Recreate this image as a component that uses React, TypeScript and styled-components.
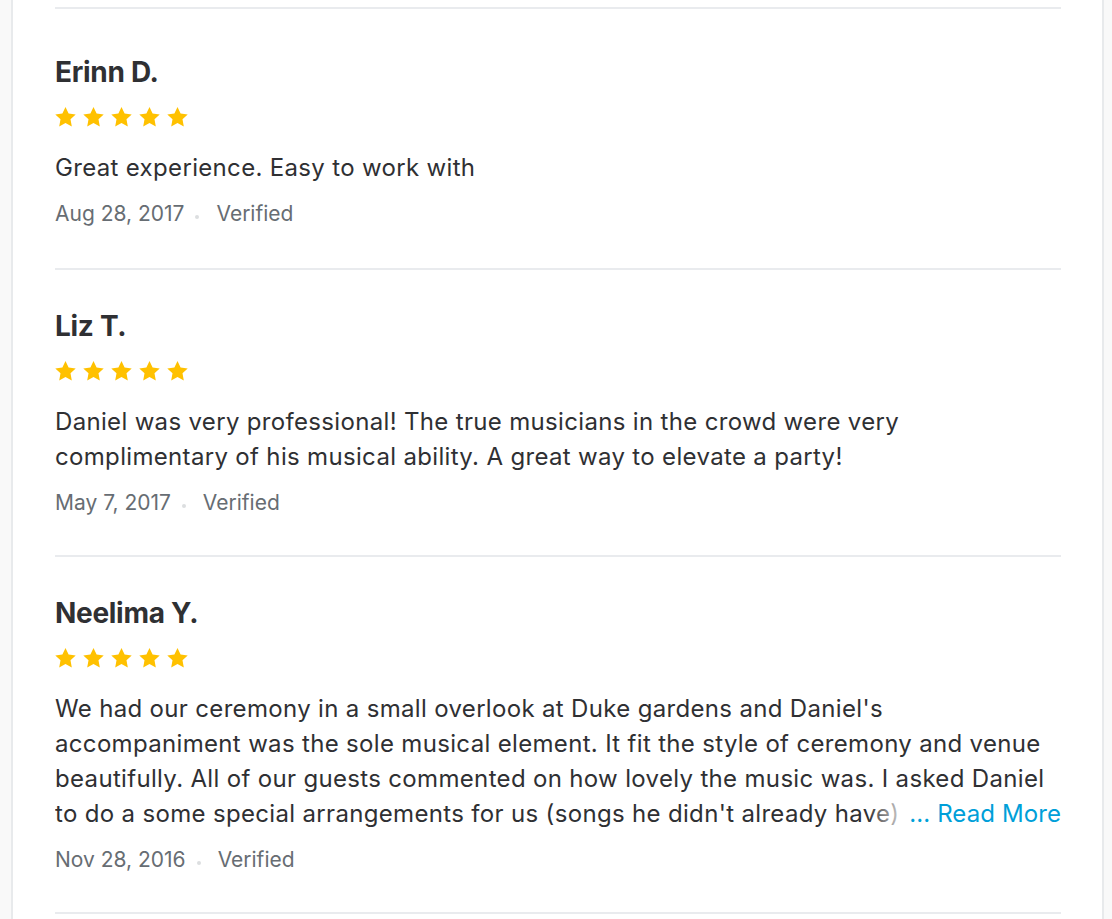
import React from "react";
import styled, { createGlobalStyle } from "styled-components";

const GlobalStyle = createGlobalStyle`
  html, body {
    margin: 0;
    padding: 0;
    background: #f9f9f9;
  }
  body {
    font-family: Inter, "Open Sans", sans-serif;
    color: #2f3033;
  }
`;

const Page = styled.div`
  display: flex;
  padding: 0 8px 0 11px;
  height: 919px;
  overflow: hidden;
`;

const Card = styled.section`
  flex: 1;
  background: #ffffff;
  border-left: 2px solid #e8eaec;
  border-right: 2px solid #e8eaec;
  padding: 7px 41px 0 42px;
`;

const Review = styled.article<{ $first?: boolean }>`
  border-top: 2px solid #e9ebee;
  padding: ${(p) => (p.$first ? "46px 0 40px" : "39px 0 38px")};
`;

const Name = styled.h3`
  margin: 0;
  font-size: 28px;
  line-height: 34px;
  font-weight: 700;
  color: #2f3033;
  letter-spacing: -0.3px;
`;

const Stars = styled.div`
  display: flex;
  gap: 7px;
  height: 20px;
  margin-top: 18px;
`;

const Body = styled.div<{ $clamped?: boolean }>`
  position: relative;
  margin-top: 23px;
  font-size: 24px;
  line-height: 35px;
  letter-spacing: 0.33px;
  color: #2f3033;
  white-space: nowrap;
  ${(p) => (p.$clamped ? "max-height: 140px; overflow: hidden;" : "")}
`;

const ReadMore = styled.a`
  position: absolute;
  right: 0;
  bottom: 0;
  line-height: 35px;
  padding-left: 7px;
  letter-spacing: 0.1px;
  background: #ffffff;
  color: #009fd9;
  text-decoration: none;
  cursor: pointer;
  &::before {
    content: "";
    position: absolute;
    top: 0;
    bottom: 0;
    left: -34px;
    width: 34px;
    background: linear-gradient(
      to right,
      rgba(255, 255, 255, 0),
      rgba(255, 255, 255, 0.8)
    );
  }
`;

const Meta = styled.div`
  display: flex;
  align-items: center;
  margin-top: 15px;
  font-size: 21px;
  line-height: 28px;
  letter-spacing: 0;
  color: #676d73;
`;

const Dot = styled.span`
  width: 4px;
  height: 4px;
  border-radius: 50%;
  background: #dcdee0;
  margin: 6px 17px 0 11px;
`;

const Star = () => (
  <svg width="21" height="20" viewBox="0 0 21 20" aria-hidden="true">
    <path
      fill="#ffc100"
      d="M10.5 0l3.1 6.5 7.1.9-5.2 4.9 1.3 7.1-6.3-3.4-6.3 3.4 1.3-7.1L.3 7.4l7.1-.9z"
    />
  </svg>
);

type ReviewData = {
  name: string;
  lines: string[];
  date: string;
  clamped?: boolean;
};

const reviews: ReviewData[] = [
  {
    name: "Erinn D.",
    lines: ["Great experience. Easy to work with"],
    date: "Aug 28, 2017",
  },
  {
    name: "Liz T.",
    lines: [
      "Daniel was very professional! The true musicians in the crowd were very",
      "complimentary of his musical ability. A great way to elevate a party!",
    ],
    date: "May 7, 2017",
  },
  {
    name: "Neelima Y.",
    lines: [
      "We had our ceremony in a small overlook at Duke gardens and Daniel's",
      "accompaniment was the sole musical element. It fit the style of ceremony and venue",
      "beautifully. All of our guests commented on how lovely the music was. I asked Daniel",
      "to do a some special arrangements for us (songs he didn't already have)",
    ],
    date: "Nov 28, 2016",
    clamped: true,
  },
];

export default function App() {
  return (
    <>
      <GlobalStyle />
      <Page>
        <Card>
          {reviews.map((r, idx) => (
            <Review key={r.name} $first={idx === 0}>
              <Name>{r.name}</Name>
              <Stars>
                {[0, 1, 2, 3, 4].map((i) => (
                  <Star key={i} />
                ))}
              </Stars>
              <Body $clamped={r.clamped}>
                {r.lines.map((l, i) => (
                  <React.Fragment key={i}>
                    {l}
                    {i < r.lines.length - 1 && <br />}
                  </React.Fragment>
                ))}
                {r.clamped && <ReadMore>... Read More</ReadMore>}
              </Body>
              <Meta>
                <span>{r.date}</span>
                <Dot />
                <span>Verified</span>
              </Meta>
            </Review>
          ))}
          <Review />
        </Card>
      </Page>
    </>
  );
}
